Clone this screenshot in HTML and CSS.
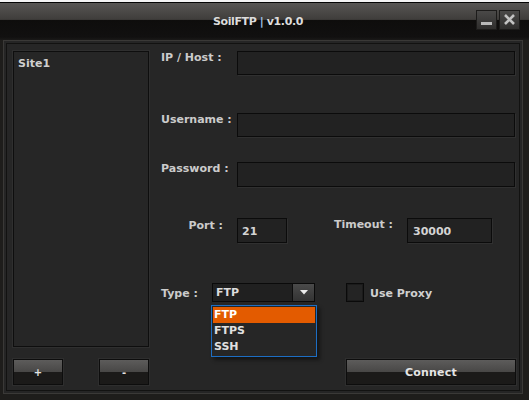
FILE: index.html
```html
<!DOCTYPE html>
<html>
<head>
<meta charset="utf-8">
<title>SoilFTP</title>
<link rel="stylesheet" href="styles.css">
</head>
<body>
<div class="strip"></div>
<div class="window">
  <div class="titlebar">
    <div class="tb-side"></div>
    <div class="title">SoilFTP <span class="sep">|</span> v1.0.0</div>
    <div class="tb-side tb-btns">
      <div class="wbtn">
        <svg width="19" height="18" viewBox="0 0 19 18"><rect x="4" y="11" width="11" height="3" fill="#b9b9b9"/></svg>
      </div>
      <div class="wbtn">
        <svg width="19" height="18" viewBox="0 0 19 18"><path d="M5 4 L14 13 M14 4 L5 13" stroke="#c2c2c2" stroke-width="2.6" fill="none"/></svg>
      </div>
    </div>
  </div>
  <div class="frame">
    <div class="panel">
      <div class="left">
        <div class="sites">
          <div class="site">Site1</div>
        </div>
        <div class="leftbtns">
          <div class="btn small">+</div>
          <div class="btn small">-</div>
        </div>
      </div>
      <div class="form">
        <div class="row r-host">
          <div class="lbl">IP / Host :</div>
          <div class="input wide"></div>
        </div>
        <div class="row r-user">
          <div class="lbl">Username :</div>
          <div class="input wide"></div>
        </div>
        <div class="row r-pass">
          <div class="lbl">Password :</div>
          <div class="input wide tall"></div>
        </div>
        <div class="row r-port">
          <div class="lbl lbl-port">Port :</div>
          <div class="input tall port"><span>21</span></div>
          <div class="lbl lbl-timeout">Timeout :</div>
          <div class="input tall timeout"><span>30000</span></div>
        </div>
        <div class="row r-type">
          <div class="lbl lbl-type">Type :</div>
          <div class="combo">
            <span class="combo-val">FTP</span>
            <div class="combo-btn"><svg width="8" height="5" viewBox="0 0 8 5"><path d="M0 0 H8 L4 4.5 Z" fill="#ececec"/></svg></div>
            <div class="dropdown">
              <div class="opt sel">FTP</div>
              <div class="opt">FTPS</div>
              <div class="opt">SSH</div>
            </div>
          </div>
          <div class="check"></div>
          <div class="check-lbl">Use Proxy</div>
        </div>
        <div class="connect-row">
          <div class="btn connect">Connect</div>
        </div>
      </div>
    </div>
  </div>
</div>
</body>
</html>
```

FILE: styles.css
```css
* { box-sizing: border-box; }
html, body {
  margin: 0;
  padding: 0;
  width: 529px;
  height: 400px;
  overflow: hidden;
  background: #1e1d1b;
  font-family: "DejaVu Sans", Verdana, sans-serif;
  font-weight: bold;
  font-size: 11px;
  color: #c8c8c8;
}
.strip {
  height: 2px;
  background: #f4f4f4;
}
.window {
  border-top: 1px solid #050505;
}
.titlebar {
  height: 37px;
  display: grid;
  grid-template-columns: 1fr auto 1fr;
  align-items: center;
  padding-right: 9px;
  background: linear-gradient(to bottom, #585654 0, #403e3c 16px, #363432 17px, #0e0d0c 17px, #111010 34px, #1a1918 37px);
}
.title {
  color: #dcdcdc;
  font-size: 11px;
  letter-spacing: -0.4px;
  padding-bottom: 1px;
  padding-right: 4px;
}
.sep { color: #9fc3ea; }
.tb-btns {
  display: flex;
  justify-content: flex-end;
  gap: 2px;
  align-self: start;
  padding-top: 7px;
}
.wbtn {
  width: 21px;
  height: 20px;
  border: 1px solid #1c1b1a;
  background: linear-gradient(to bottom, #4a4948, #2f2e2d);
  display: flex;
  align-items: center;
  justify-content: center;
}
.frame {
  padding: 0 6px 6px 3px;
}
.panel {
  height: 354px;
  border: 1px solid #3a3937;
  background: #262626;
  box-shadow: inset 0 0 0 2px #252525, inset 0 0 0 3px #121211;
  padding: 10px 6px 8px 9px;
  display: grid;
  grid-template-columns: 136px 1fr;
  column-gap: 12px;
}
.left {
  display: flex;
  flex-direction: column;
}
.sites {
  height: 296px;
  border: 1px solid #0e0e0e;
  box-shadow: 0 0 0 1px #2f2f2f;
  background: #262626;
  padding: 5px 4px;
}
.site {
  color: #cfcfcf;
  line-height: 13px;
}
.leftbtns {
  margin-top: 12px;
  display: flex;
  justify-content: space-between;
}
.btn {
  height: 26px;
  border: 1px solid #0d0d0d;
  box-shadow: 0 0 0 1px #2e2e2e;
  background: linear-gradient(to bottom, #5d5c5b 0, #484746 12px, #1b1a19 12px, #1b1a19 100%);
  color: #e4e4e4;
  display: flex;
  align-items: center;
  justify-content: center;
  line-height: 13px;
}
.btn.small { width: 50px; font-size: 10px; }
.btn.connect { width: 170px; letter-spacing: 0.2px; }
.form {
  display: flex;
  flex-direction: column;
}
.row {
  display: flex;
  align-items: flex-start;
}
.lbl {
  width: 76px;
  line-height: 13px;
  color: #cbcbcb;
  flex: none;
}
.input {
  height: 24px;
  border: 1px solid #0b0b0b;
  background: #222222;
  box-shadow: 1px 1px 0 #303030;
  display: flex;
  align-items: center;
  padding: 2px 0 0 4px;
  color: #d4d4d4;
}
.input.tall { height: 25px; }
.input.wide { flex: 1; margin-right: 1px; }
.r-user { margin-top: 38px; }
.r-pass { margin-top: 25px; }
.r-port { margin-top: 31px; }
.lbl-port {
  text-align: right;
  padding-right: 14px;
  padding-top: 1px;
}
.input.port { width: 50px; }
.lbl-timeout {
  width: 120px;
  text-align: right;
  padding-right: 14px;
  padding-top: 0;
}
.input.timeout { width: 85px; padding-left: 5px; }
.r-type {
  margin-top: 40px;
  align-items: center;
}
.lbl-type { width: 51px; padding-top: 1px; }
.combo {
  position: relative;
  width: 103px;
  height: 19px;
  border: 1px solid #0a0a0a;
  background: #202020;
  display: flex;
  align-items: center;
}
.combo-val {
  flex: 1;
  padding-left: 3px;
  color: #dcdcdc;
  line-height: 13px;
}
.combo-btn {
  width: 22px;
  height: 100%;
  border-left: 1px solid #0d0d0d;
  background: linear-gradient(to bottom, #4a4a4a, #333333);
  display: flex;
  align-items: center;
  justify-content: center;
}
.dropdown {
  position: absolute;
  left: -2px;
  top: 21px;
  width: 106px;
  border: 1px solid #1d6ec4;
  background: #262626;
  padding: 1px;
  box-shadow: 3px 3px 4px rgba(0,0,0,0.45);
  z-index: 5;
}
.opt {
  height: 16px;
  line-height: 16px;
  padding-left: 1px;
  color: #e0e0e0;
}
.opt.sel {
  background: #e35b00;
  color: #ffffff;
}
.check {
  margin-left: 31px;
  width: 18px;
  height: 19px;
  border: 1px solid #0a0a0a;
  background: #242424;
  box-shadow: inset 0 0 0 1px #1b1b1b;
}
.check-lbl {
  margin-left: 6px;
  color: #d0d0d0;
  line-height: 13px;
  padding-top: 2px;
}
.connect-row {
  margin-top: auto;
  display: flex;
  justify-content: flex-end;
}
```
